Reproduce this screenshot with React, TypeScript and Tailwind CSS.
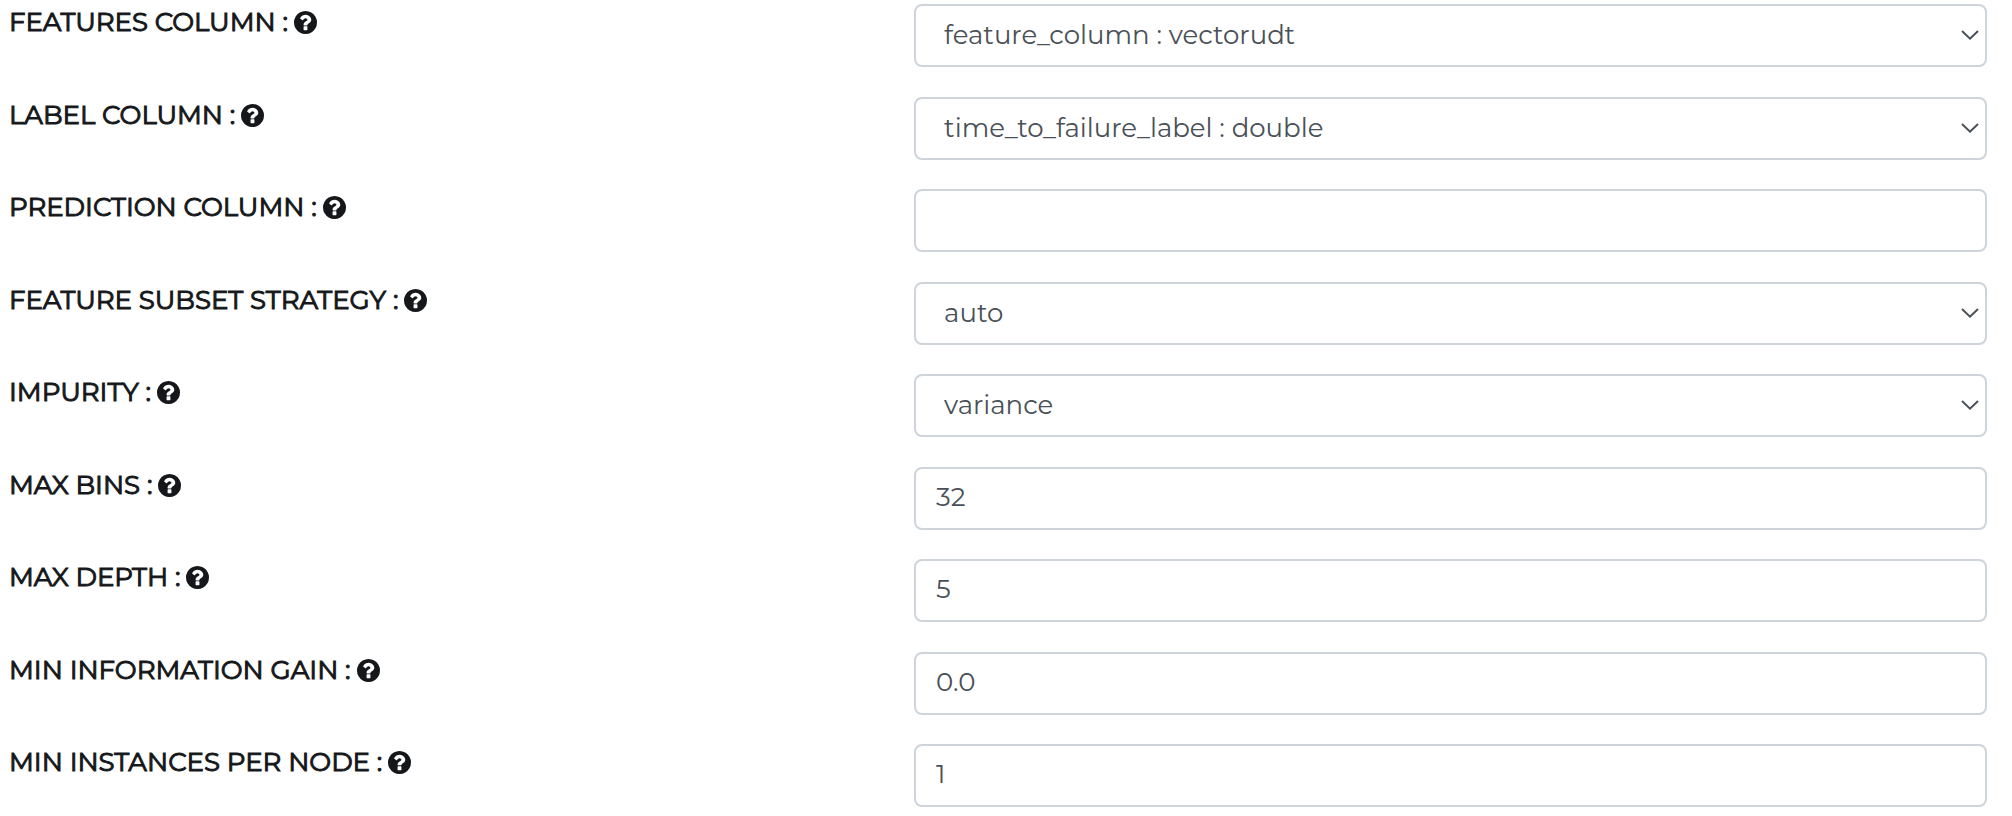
import { useState } from "react";

type Field = {
  id: string;
  label: string;
  value: string;
  kind: "select" | "text";
};

const FIELDS: Field[] = [
  { id: "features-column", label: "FEATURES COLUMN :", value: "feature_column : vectorudt", kind: "select" },
  { id: "label-column", label: "LABEL COLUMN :", value: "time_to_failure_label : double", kind: "select" },
  { id: "prediction-column", label: "PREDICTION COLUMN :", value: "", kind: "text" },
  { id: "feature-subset-strategy", label: "FEATURE SUBSET STRATEGY :", value: "auto", kind: "select" },
  { id: "impurity", label: "IMPURITY :", value: "variance", kind: "select" },
  { id: "max-bins", label: "MAX BINS :", value: "32", kind: "text" },
  { id: "max-depth", label: "MAX DEPTH :", value: "5", kind: "text" },
  { id: "min-information-gain", label: "MIN INFORMATION GAIN :", value: "0.0", kind: "text" },
  { id: "min-instances-per-node", label: "MIN INSTANCES PER NODE :", value: "1", kind: "text" },
];

const CONTROL =
  "block h-[63px] w-full rounded-lg border-2 border-[#ced4da] bg-white text-[26px] text-[#495057] outline-none focus:border-[#80bdff]";

function HelpIcon() {
  return (
    <svg viewBox="128 128 1536 1536" className="size-[23px]" fill="currentColor" aria-hidden="true">
      <path d="M1024 1376v-192q0-14-9-23t-23-9h-192q-14 0-23 9t-9 23v192q0 14 9 23t23 9h192q14 0 23-9t9-23zm256-672q0-88-55.500-163t-138.500-116-170-41q-243 0-371 213-15 24 8 42l132 100q7 6 19 6 16 0 25-12 53-68 86-92 34-24 86-24 48 0 85.500 26t37.500 59q0 38-20 61t-68 45q-63 28-115.500 86.500t-52.500 125.500v36q0 14 9 23t23 9h192q14 0 23-9t9-23q0-19 21.500-49.500t54.500-49.500q32-18 49-28.500t46-35 44.500-48 28-60.500 12.500-81zm384 192q0 209-103 385.500t-279.500 279.500-385.500 103-385.500-103-279.500-279.500-103-385.500 103-385.500 279.500-279.500 385.500-103 385.500 103 279.500 279.500 103 385.500z" />
    </svg>
  );
}

function SelectControl({ id, value }: { id: string; value: string }) {
  return (
    <div className="relative">
      <select id={id} defaultValue={value} className={`${CONTROL} appearance-none pr-12 pl-7`}>
        <option value={value}>{value}</option>
      </select>
      <svg
        viewBox="0 0 18 10"
        className="pointer-events-none absolute top-[26px] right-2 h-[10px] w-[18px] text-[#495057]"
        fill="none"
        stroke="currentColor"
        strokeWidth="2"
        aria-hidden="true"
      >
        <path d="M1 1 L9 8.6 L17 1" />
      </svg>
    </div>
  );
}

function TextControl({ id, initial }: { id: string; initial: string }) {
  const [value, setValue] = useState(initial);
  return (
    <input
      id={id}
      type="text"
      value={value}
      onChange={(event) => setValue(event.target.value)}
      className={`${CONTROL} px-5 pb-1`}
    />
  );
}

function FieldRow({ field }: { field: Field }) {
  return (
    <div className="flex items-start gap-[15px] odd:mb-[30px] even:mb-[29px] last:mb-0">
      <div className="flex w-[45%] shrink-0 items-center gap-1.5 pt-0.5">
        <label
          htmlFor={field.id}
          className="text-[26px] leading-8 font-normal text-[#15171a] [-webkit-text-stroke:1px_#15171a]"
        >
          {field.label}
        </label>
        <button type="button" aria-label="Help" className="shrink-0 text-[#15171a]">
          <HelpIcon />
        </button>
      </div>
      <div className="min-w-0 flex-1">
        {field.kind === "select" ? (
          <SelectControl id={field.id} value={field.value} />
        ) : (
          <TextControl id={field.id} initial={field.value} />
        )}
      </div>
    </div>
  );
}

export default function App() {
  return (
    <form className="min-h-screen bg-white pt-1 pr-[25px] pl-[9px] font-['Montserrat','Inter',sans-serif]">
      {FIELDS.map((field) => (
        <FieldRow key={field.id} field={field} />
      ))}
    </form>
  );
}
